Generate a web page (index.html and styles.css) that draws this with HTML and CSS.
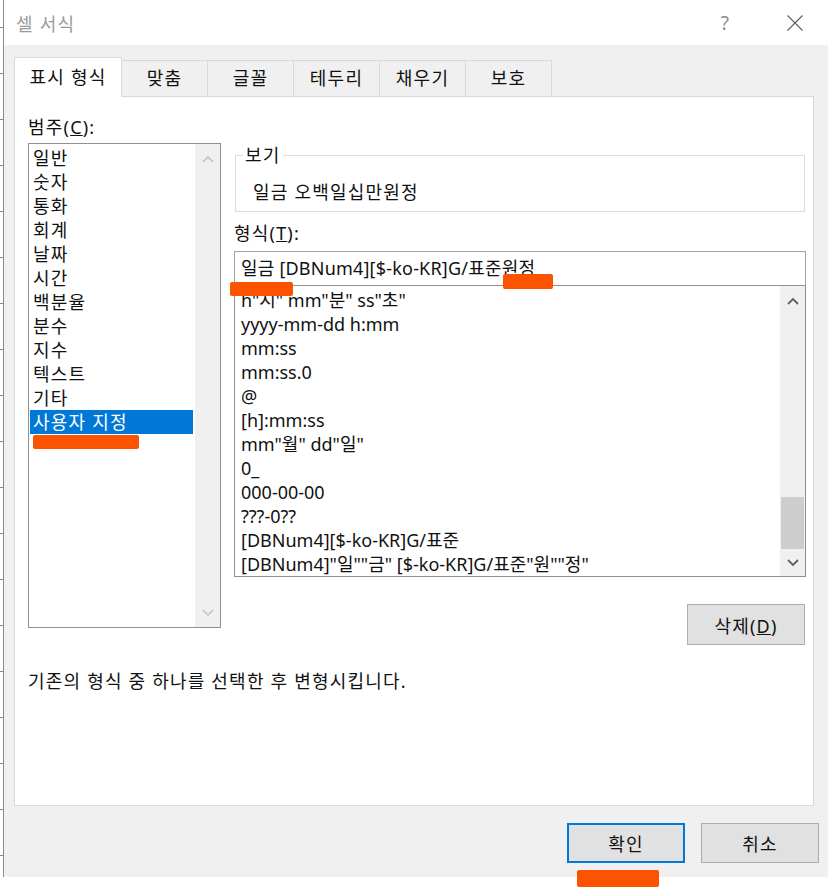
FILE: index.html
```html
<!DOCTYPE html>
<html lang="ko">
<head>
  <meta charset="UTF-8">
  <meta name="viewport" content="width=device-width, initial-scale=1.0">
  <title>셀 서식</title>
  <link rel="stylesheet" href="styles.css">
</head>
<body>
  <div class="screen">
    <div class="sheet-edge"></div>
    <div class="dialog">
      <div class="titlebar">
        <span class="title">셀 서식</span>
        <span class="help">?</span>
        <svg class="close" width="16" height="16" viewBox="0 0 16 16">
          <path d="M0.5 0.5 L15.5 15.5 M15.5 0.5 L0.5 15.5" stroke="#5c5c5c" stroke-width="1.1" fill="none"/>
        </svg>
      </div>

      <div class="dialog-body">
        <div class="tabs">
          <div class="tab active">표시 형식</div>
          <div class="tab">맞춤</div>
          <div class="tab">글꼴</div>
          <div class="tab">테두리</div>
          <div class="tab">채우기</div>
          <div class="tab">보호</div>
        </div>

        <div class="panel">
          <div class="columns">
            <div class="category">
              <div class="label">범주(<u>C</u>):</div>
              <div class="listbox category-list">
                <ul class="items">
                  <li class="item">일반</li>
                  <li class="item">숫자</li>
                  <li class="item">통화</li>
                  <li class="item">회계</li>
                  <li class="item">날짜</li>
                  <li class="item">시간</li>
                  <li class="item">백분율</li>
                  <li class="item">분수</li>
                  <li class="item">지수</li>
                  <li class="item">텍스트</li>
                  <li class="item">기타</li>
                  <li class="item selected">사용자 지정</li>
                </ul>
                <div class="scrollbar disabled">
                  <div class="sb-btn sb-up">
                    <svg width="12" height="8" viewBox="0 0 12 8"><polyline points="1,7 6,2 11,7" fill="none" stroke="currentColor" stroke-width="1.6"/></svg>
                  </div>
                  <div class="sb-track"></div>
                  <div class="sb-btn sb-down">
                    <svg width="12" height="8" viewBox="0 0 12 8"><polyline points="1,1 6,6 11,1" fill="none" stroke="currentColor" stroke-width="1.6"/></svg>
                  </div>
                </div>
              </div>
            </div>

            <div class="format">
              <fieldset class="preview">
                <legend>보기</legend>
                <div class="preview-text">일금 오백일십만원정</div>
              </fieldset>
              <div class="label">형식(<u>T</u>):</div>
              <div class="format-input">일금 [DBNum4][$-ko-KR]G/표준원정</div>
              <div class="listbox format-list">
                <ul class="items">
                  <li class="item">h"시" mm"분" ss"초"</li>
                  <li class="item">yyyy-mm-dd h:mm</li>
                  <li class="item">mm:ss</li>
                  <li class="item">mm:ss.0</li>
                  <li class="item">@</li>
                  <li class="item">[h]:mm:ss</li>
                  <li class="item">mm"월" dd"일"</li>
                  <li class="item">0_</li>
                  <li class="item">000-00-00</li>
                  <li class="item">???-0??</li>
                  <li class="item">[DBNum4][$-ko-KR]G/표준</li>
                  <li class="item">[DBNum4]"일""금" [$-ko-KR]G/표준"원""정"</li>
                </ul>
                <div class="scrollbar">
                  <div class="sb-btn sb-up">
                    <svg width="12" height="8" viewBox="0 0 12 8"><polyline points="1,7 6,2 11,7" fill="none" stroke="currentColor" stroke-width="1.8"/></svg>
                  </div>
                  <div class="sb-track"><div class="sb-thumb"></div></div>
                  <div class="sb-btn sb-down">
                    <svg width="12" height="8" viewBox="0 0 12 8"><polyline points="1,1 6,6 11,1" fill="none" stroke="currentColor" stroke-width="1.8"/></svg>
                  </div>
                </div>
              </div>
              <button class="btn delete">삭제(<u>D</u>)</button>
            </div>
          </div>
          <p class="hint">기존의 형식 중 하나를 선택한 후 변형시킵니다.</p>
        </div>

        <div class="footer">
          <button class="btn primary">확인</button>
          <button class="btn">취소</button>
        </div>
      </div>
    </div>
  </div>

  <!-- highlighter marks drawn over the screenshot -->
  <div class="mark mark-category"></div>
  <div class="mark mark-input-left"></div>
  <div class="mark mark-input-right"></div>
  <div class="mark mark-ok"></div>
</body>
</html>
```

FILE: styles.css
```css
* {
  margin: 0;
  padding: 0;
  box-sizing: border-box;
}

body {
  width: 828px;
  height: 887px;
  overflow: hidden;
  position: relative;
  background: #fff;
  font-family: "Noto Sans", "Noto Sans CJK KR", sans-serif;
  font-size: 18px;
  color: #111;
}

ul {
  list-style: none;
}

/* hangul-only labels run a little wider than Noto's glyphs */
.title,
.tab,
.label,
.category-list .item,
.preview legend,
.preview-text,
.hint,
.btn {
  letter-spacing: 1.2px;
}

.screen {
  display: flex;
  height: 877px;
}

/* sliver of the spreadsheet behind the dialog */
.sheet-edge {
  width: 4px;
  border-right: 1px solid #8c8c8c;
  background: repeating-linear-gradient(to bottom, transparent 0 45px, #8a8a8a 45px 46px);
  background-position: 0 -18px;
}

.dialog {
  flex: 1;
  display: flex;
  flex-direction: column;
}

.titlebar {
  height: 45px;
  display: flex;
  align-items: center;
  padding: 0 25px 0 12px;
  background: #fff;
}

.title {
  flex: 1;
  color: #9a9a9a;
}

.help {
  color: #8c8c8c;
  font-size: 19px;
  margin-right: 58px;
}

.dialog-body {
  flex: 1;
  background: #f0f0f0;
  padding: 12px 14px 0 10px;
}

.tabs {
  display: flex;
  align-items: flex-start;
  height: 39px;
}

.tab {
  width: 87px;
  height: 36px;
  margin-top: 3px;
  margin-left: -1px;
  border: 1px solid #d9d9d9;
  border-bottom: none;
  background: #f0f0f0;
  text-align: center;
  line-height: 35px;
}

.tab.active {
  width: 108px;
  height: 40px;
  margin-top: 0;
  margin-left: 0;
  background: #fff;
  line-height: 39px;
  position: relative;
  z-index: 1;
}

.panel {
  height: 710px;
  background: #fff;
  border: 1px solid #d9d9d9;
  padding: 19px 7px 0 13px;
}

.columns {
  display: grid;
  grid-template-columns: 193px 572px;
  column-gap: 13px;
}

.label {
  line-height: 22px;
}

.listbox {
  display: flex;
  background: #fff;
  border: 1px solid #8f8f8f;
}

.items {
  flex: 1;
}

.item {
  height: 24px;
  line-height: 25px;
  white-space: nowrap;
}

.category-list {
  margin-top: 5px;
  height: 485px;
}

.category-list .items {
  padding: 2px 2px 0 1px;
}

.category-list .item {
  padding-left: 3px;
}

.item.selected {
  background: #0078d7;
  color: #fff;
}

.scrollbar {
  width: 25px;
  background: #f0f0f0;
  display: flex;
  flex-direction: column;
  color: #606060;
}

.scrollbar.disabled {
  color: #c4c4c4;
}

.sb-btn {
  display: flex;
  align-items: center;
  justify-content: center;
}

.sb-up {
  height: 30px;
}

.sb-down {
  height: 28px;
}

.sb-track {
  flex: 1;
}

.format-list .sb-up {
  height: 32px;
}

.sb-thumb {
  margin: 181px 1px 0;
  height: 52px;
  background: #cdcdcd;
}

.format {
  display: flex;
  flex-direction: column;
  padding-top: 28px;
}

.preview {
  margin: 0 1px;
  padding: 0 0 8px;
  border: 1px solid #dcdcdc;
  min-width: 0;
}

.preview legend {
  margin-left: 7px;
  padding: 0 2px;
  line-height: 22px;
}

.preview-text {
  padding: 15px 17px 0;
  line-height: 22px;
}

.format .label {
  margin-top: 10px;
}

.format-input {
  margin-top: 7px;
  height: 35px;
  border: 1px solid #a3a3a3;
  border-bottom-color: #8f8f8f;
  padding-left: 6px;
  line-height: 33px;
  letter-spacing: 0.2px;
  white-space: nowrap;
}

.format-list {
  height: 291px;
  border-top: none;
}

.format-list .items {
  padding: 2px 0 0 6px;
}

.btn {
  width: 118px;
  height: 40px;
  background: #e1e1e1;
  border: 1px solid #adadad;
  font-family: inherit;
  font-size: 18px;
  color: #111;
}

.btn.primary {
  border: 2px solid #0078d7;
}

.delete {
  height: 41px;
  margin-top: 27px;
  margin-right: 1px;
  align-self: flex-end;
}

.hint {
  margin-top: 25px;
  line-height: 22px;
}

.footer {
  display: flex;
  justify-content: flex-end;
  gap: 16px;
  margin-top: 17px;
  margin-right: -5px;
}

.mark {
  position: absolute;
  background: #fc5300;
  border-radius: 2px;
}

.mark-category {
  left: 33px;
  top: 435px;
  width: 106px;
  height: 14px;
}

.mark-input-left {
  left: 230px;
  top: 282px;
  width: 63px;
  height: 14px;
}

.mark-input-right {
  left: 503px;
  top: 274px;
  width: 50px;
  height: 15px;
}

.mark-ok {
  left: 577px;
  top: 870px;
  width: 82px;
  height: 17px;
}
```
